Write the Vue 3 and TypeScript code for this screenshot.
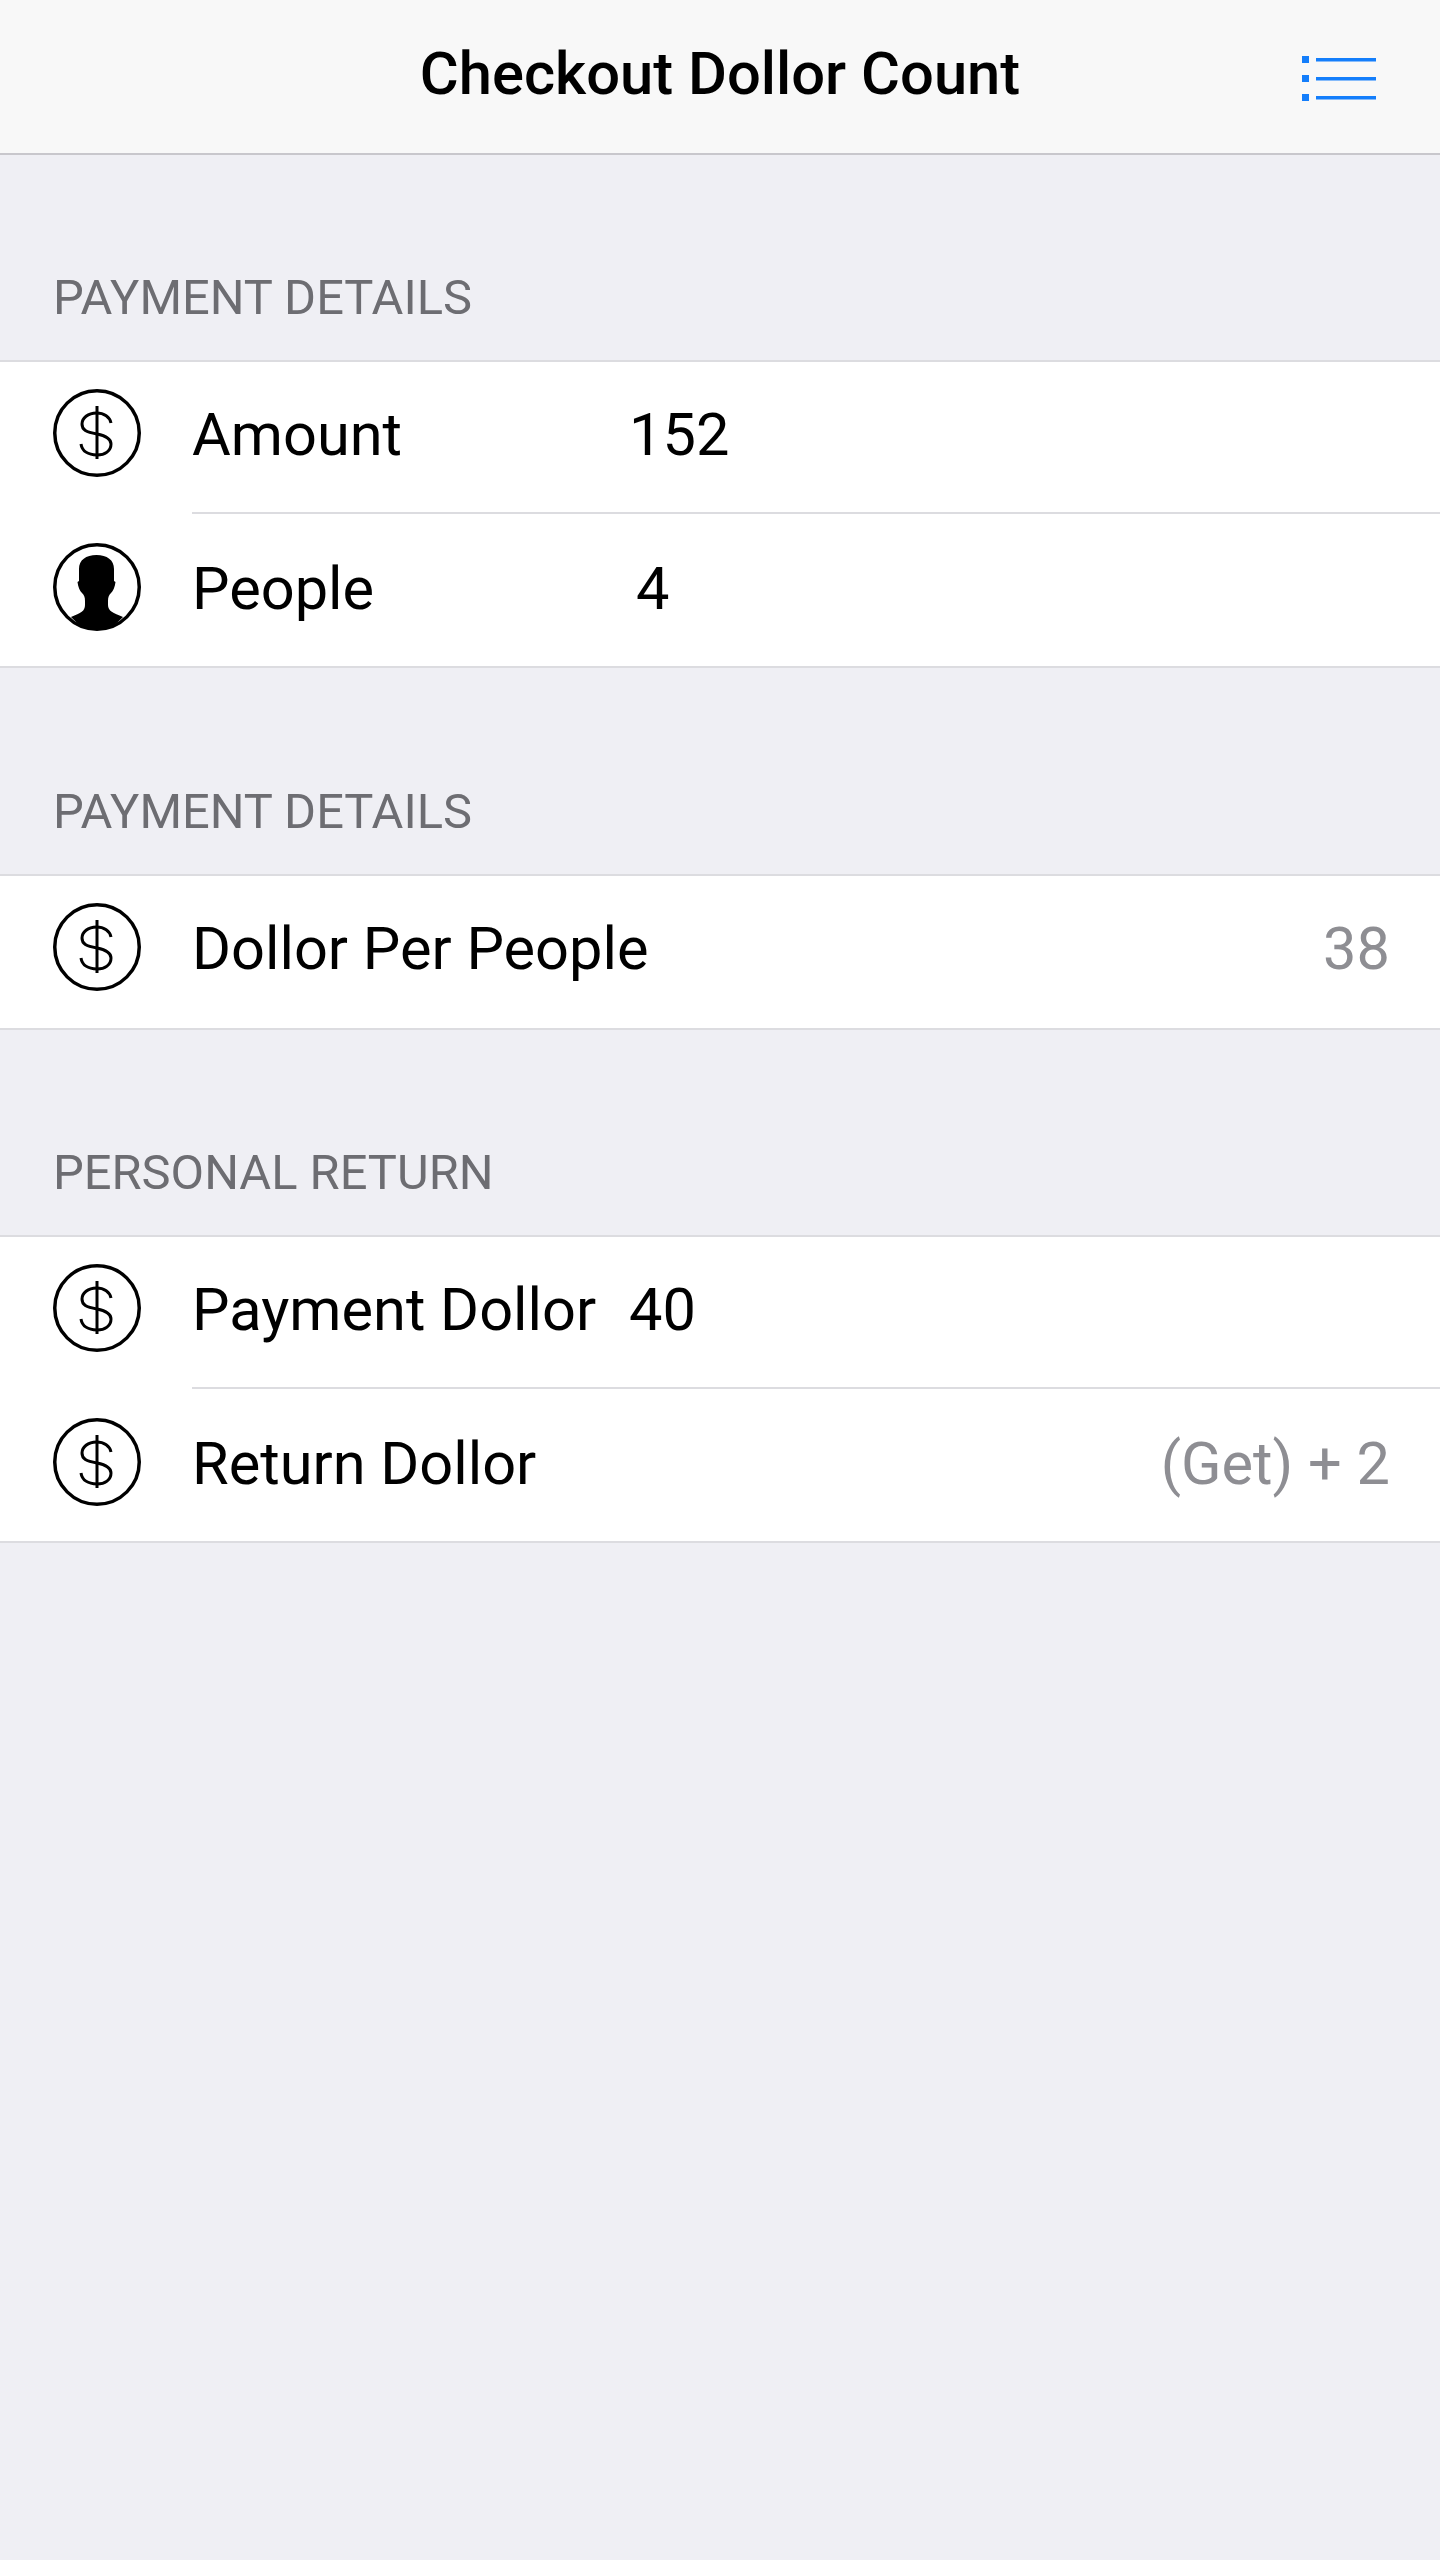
<template>
  <div class="page">
    <header class="navbar">
      <h1 class="title">Checkout Dollor Count</h1>
      <svg class="menu-icon" width="76" height="50" viewBox="0 0 76 50">
        <g fill="#147efb">
          <rect x="0" y="3" width="7" height="7" />
          <rect x="0" y="22" width="7" height="7" />
          <rect x="0" y="41" width="7" height="7" />
          <rect x="14" y="5" width="60" height="3.5" />
          <rect x="14" y="24" width="60" height="3.5" />
          <rect x="14" y="43" width="60" height="3.5" />
        </g>
      </svg>
    </header>

    <section v-for="group in groups" :key="group.id" class="group">
      <div class="group-title">{{ group.title }}</div>
      <div class="rows">
        <div v-for="row in group.rows" :key="row.label" class="row">
          <svg class="row-icon" width="88" height="88" viewBox="0 0 88 88">
            <circle cx="44" cy="44" r="42.25" fill="none" stroke="#000" stroke-width="3.5" />
            <template v-if="row.icon === 'dollar'">
              <path
                d="M58 34C57 28 51 24 43.500 24C35 24 29 29 29 35C29 41 33 43 44 45C54 47 58 50 58 55C58 62 52 66 44 66C35 66 29 62 28 55"
                fill="none"
                stroke="#000"
                stroke-width="3"
              />
              <path d="M44 17V70" stroke="#000" stroke-width="3" />
            </template>
            <template v-else>
              <path
                d="M43.500 12C33 12 26 17 26 26L26 38L24.500 39C25 44 27 48 29 50C31 52 32 54 32 58L32 62C32 68 28 70 18 74C26 83 34 86.500 44 86.500C54 86.500 62 83 70 74C60 70 55 68 55 62L55 58C55 54 56 52 58 50C60 48 62 44 62.500 39L61 38L61 26C61 17 54 12 43.500 12Z"
                fill="#000"
              />
            </template>
          </svg>
          <div class="row-body">
            <span class="row-label">{{ row.label }}</span>
            <span v-if="row.input" class="row-input" :class="row.inputClass">{{ row.input }}</span>
            <span v-if="row.detail" class="row-detail">{{ row.detail }}</span>
          </div>
        </div>
      </div>
    </section>
  </div>
</template>

<script setup lang="ts">
interface Row {
  icon: 'dollar' | 'person';
  label: string;
  input?: string;
  inputClass?: string;
  detail?: string;
}

interface Group {
  id: number;
  title: string;
  rows: Row[];
}

const groups: Group[] = [
  {
    id: 1,
    title: 'PAYMENT DETAILS',
    rows: [
      { icon: 'dollar', label: 'Amount', input: '152' },
      { icon: 'person', label: 'People', input: '4', inputClass: 'narrow' },
    ],
  },
  {
    id: 2,
    title: 'PAYMENT DETAILS',
    rows: [{ icon: 'dollar', label: 'Dollor Per People', detail: '38' }],
  },
  {
    id: 3,
    title: 'PERSONAL RETURN',
    rows: [
      { icon: 'dollar', label: 'Payment Dollor', input: '40' },
      { icon: 'dollar', label: 'Return Dollor', detail: '(Get) + 2' },
    ],
  },
];
</script>

<style scoped>
.page {
  min-height: 2560px;
  background: #efeff4;
  font-family: Roboto, "Liberation Sans", sans-serif;
  color: #000;
}

.navbar {
  position: relative;
  height: 153px;
  display: flex;
  align-items: center;
  justify-content: center;
  background: #f8f8f8;
  border-bottom: 2px solid #c8c7cc;
}

.title {
  margin: 0 0 4px;
  font-size: 59.7px;
  font-weight: 500;
  line-height: 1;
}

.menu-icon {
  position: absolute;
  right: 62px;
  top: 53px;
}

.group-title {
  padding: 99px 0 18px 53px;
  font-size: 48.8px;
  line-height: 88px;
  color: #6d6d72;
}

.group + .group .group-title {
  padding-top: 100px;
}

.group:last-child .group-title {
  padding-top: 99px;
}

.rows {
  background: #fff;
  border-top: 2px solid #dcdce0;
  border-bottom: 2px solid #dcdce0;
}

.row {
  display: flex;
  align-items: center;
  height: 152px;
  padding-left: 53px;
}

.row-icon {
  flex: none;
  margin-right: 51px;
  margin-bottom: 11px;
}

.row + .row .row-icon {
  margin-bottom: 7px;
}

.row-body {
  flex: 1;
  align-self: stretch;
  display: flex;
  align-items: center;
  padding: 0 50px 7px 0;
}

.row + .row .row-body {
  border-top: 2px solid #dcdce0;
  margin-top: -2px;
  padding-bottom: 3px;
}

.row-label {
  width: 437px;
  flex: none;
  font-size: 59.5px;
  white-space: nowrap;
}

.row-input {
  font-size: 59.5px;
}

.row-input.narrow {
  padding-left: 7px;
}

.row-detail {
  margin-left: auto;
  font-size: 59.5px;
  color: #8e8e93;
}
</style>

<style>
body {
  background: #efeff4;
}
</style>
